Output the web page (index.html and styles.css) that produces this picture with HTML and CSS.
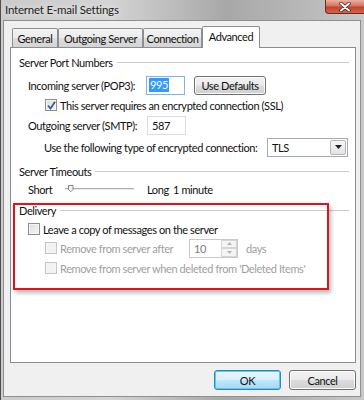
FILE: index.html
```html
<!DOCTYPE html>
<html lang="en">
<head>
    <meta charset="UTF-8">
    <meta name="viewport" content="width=device-width, initial-scale=1.0">
    <title>Internet E-mail Settings</title>
    <link rel="stylesheet" href="styles.css">
</head>
<body>
    <div class="window">
        <div class="titlebar">
            <span class="title">Internet E-mail Settings</span>
            <span class="close">
                <svg width="14" height="10" viewBox="0 0 14 10">
                    <path d="M3 1.5 L11 8.5 M11 1.5 L3 8.5" stroke="#4a1a12" stroke-width="3.4" stroke-linecap="round"/>
                    <path d="M3 1.5 L11 8.5 M11 1.5 L3 8.5" stroke="#fff" stroke-width="2" stroke-linecap="round"/>
                </svg>
            </span>
        </div>

        <div class="client">
            <div class="tabs">
                <div class="tab tab-general">General</div>
                <div class="tab tab-outgoing">Outgoing Server</div>
                <div class="tab tab-connection">Connection</div>
                <div class="tab tab-advanced active">Advanced</div>
            </div>

            <div class="panel">
                <div class="group-head"><span>Server Port Numbers</span><span class="rule"></span></div>

                <div class="row row-incoming">
                    <span class="label w-incoming">Incoming server (POP3):</span>
                    <span class="field port focused"><span class="selection">995</span></span>
                    <span class="button defaults">Use Defaults</span>
                </div>

                <div class="row row-ssl">
                    <span class="check checked">
                        <svg width="9" height="9" viewBox="0 0 9 9"><path d="M1 4.5 L3.5 7.5 L8 0.8" fill="none" stroke="#3b5a9a" stroke-width="1.8"/></svg>
                    </span>
                    <span class="check-text">This server requires an encrypted connection (SSL)</span>
                </div>

                <div class="row row-outgoing">
                    <span class="label w-outgoing">Outgoing server (SMTP):</span>
                    <span class="field port">587</span>
                </div>

                <div class="row row-enc">
                    <span class="label w-enc">Use the following type of encrypted connection:</span>
                    <span class="field select">
                        <span class="select-value">TLS</span>
                        <span class="select-arrow">
                            <svg width="7" height="4" viewBox="0 0 7 4"><path d="M0 0 H7 L3.5 4 Z" fill="#222"/></svg>
                        </span>
                    </span>
                </div>

                <div class="group-head head-timeouts"><span>Server Timeouts</span><span class="rule"></span></div>

                <div class="row row-slider">
                    <span class="label w-short">Short</span>
                    <span class="slider">
                        <span class="track"></span>
                        <svg class="thumb" width="9" height="9" viewBox="0 0 9 9">
                            <path d="M1.5 1.5 H6 V5.5 L3.8 7.8 L1.5 5.5 Z" fill="#f4f4f4" stroke="#8a8a8a"/>
                        </svg>
                    </span>
                    <span class="label w-long">Long</span>
                    <span class="label">1 minute</span>
                </div>

                <div class="group-head head-delivery"><span>Delivery</span><span class="rule"></span></div>

                <div class="row row-leave">
                    <span class="check"></span>
                    <span class="check-text">Leave a copy of messages on the server</span>
                </div>

                <div class="row row-after">
                    <span class="check disabled"></span>
                    <span class="check-text dim w-after">Remove from server after</span>
                    <span class="field spinner">
                        <span class="spin-value">10</span>
                        <span class="spin-buttons">
                            <span class="spin-btn"><svg width="5" height="3" viewBox="0 0 5 3"><path d="M0 3 H5 L2.5 0 Z" fill="#b5b5b5"/></svg></span>
                            <span class="spin-btn"><svg width="5" height="3" viewBox="0 0 5 3"><path d="M0 0 H5 L2.5 3 Z" fill="#b5b5b5"/></svg></span>
                        </span>
                    </span>
                    <span class="dim days">days</span>
                </div>

                <div class="row row-deleted">
                    <span class="check disabled"></span>
                    <span class="check-text dim">Remove from server when deleted from 'Deleted Items'</span>
                </div>
            </div>

            <div class="footer">
                <span class="button ok">OK</span>
                <span class="button cancel">Cancel</span>
            </div>
        </div>

        <!-- red annotation box drawn over the Delivery group -->
        <div class="highlight"></div>
    </div>
</body>
</html>
```

FILE: styles.css
```css
* {
    box-sizing: border-box;
}
body {
    margin: 0;
    font-family: Lato, "Noto Sans", sans-serif;
    font-size: 11px;
    letter-spacing: -0.4px;
    color: #111;
    white-space: nowrap;
}
.window {
    position: relative;
    width: 364px;
    height: 400px;
    background: linear-gradient(90deg, #cbcbcb 0%, #d4d4d4 30%, #a8a8a8 62%, #b9b9b9 85%, #c9c9c9 100%);
    border-left: 1px solid #4e4e4e;
    overflow: hidden;
}
.titlebar {
    height: 20px;
    display: flex;
    align-items: center;
    justify-content: space-between;
    padding-left: 4px;
}
.title {
    font-size: 11.5px;
    letter-spacing: -0.2px;
    color: #222;
    margin-top: -1px;
    text-shadow: 0 0 6px rgba(255, 255, 255, 0.9);
}
.close {
    align-self: flex-start;
    width: 39px;
    height: 14px;
    display: flex;
    align-items: center;
    justify-content: center;
    background: linear-gradient(#eab0a2 0%, #d7735f 45%, #c2432b 55%, #d0664c 100%);
    border: 1px solid #6a2a1f;
    border-top: none;
    border-right: none;
    border-radius: 0 0 0 4px;
}
.client {
    margin: 0 3px 0 2px;
    height: 377px;
    background: #f0f0f0;
    border: 1px solid #8d8f91;
    padding: 7px 4px 0 6px;
}

/* tabs */
.tabs {
    display: flex;
    height: 19px;
    margin-left: 2px;
}
.tab {
    height: 19px;
    border: 1px solid #8c8e94;
    border-bottom: none;
    border-radius: 2px 2px 0 0;
    background: linear-gradient(#f3f3f3 0%, #ebebeb 50%, #dedede 51%, #d4d4d4 100%);
    text-align: center;
    line-height: 20px;
}
.tab-general { width: 46px; }
.tab-outgoing { width: 85px; }
.tab-connection { width: 59px; }
.tab-advanced { width: 58px; }
.tab.active {
    position: relative;
    z-index: 1;
    height: 22px;
    margin-top: -2px;
    background: #fff;
    line-height: 19px;
}
.panel {
    height: 316px;
    background: #fff;
    border: 1px solid #898c95;
    padding: 7px 6px 0 8px;
}

/* group boxes */
.group-head {
    display: flex;
    align-items: center;
    height: 14px;
}
.group-head .rule {
    flex: 1;
    height: 1px;
    margin-left: 4px;
    margin-top: 1px;
    background: #c8ccd0;
}
.head-timeouts { margin-top: 7px; }
.head-delivery { margin-top: 4px; }

.row {
    display: flex;
    align-items: center;
    height: 20px;
    padding-left: 9px;
}
.row-incoming { margin-top: 6px; }
.row-ssl { height: 18px; margin-top: 1px; padding-left: 26px; }
.row-outgoing { margin-top: 1px; }
.row-enc { margin-top: 2px; padding-left: 25px; }
.row-slider { margin-top: 1px; }
.row-leave { height: 18px; margin-top: 3px; }
.row-after { padding-left: 26px; }
.row-deleted { height: 18px; margin-top: 1px; padding-left: 26px; }

.label { flex: none; }
.w-incoming { width: 118px; }
.w-outgoing { width: 119px; }
.w-enc { width: 223px; }
.w-short { width: 37px; }
.w-long { width: 26px; }
.w-after { width: 129px; }

/* fields */
.field {
    display: flex;
    align-items: center;
    border: 1px solid #abadb3;
    border-top-color: #e2e3ea;
    background: #fff;
    height: 19px;
}
.port {
    width: 39px;
    padding-left: 2px;
}
.port.focused {
    border-color: #7eb4ea;
}
.row-outgoing .port {
    border-color: #dcdcdc;
    padding-left: 4px;
}
.selection {
    background: #3399ff;
    color: #fff;
    padding: 0 1px;
    line-height: 14px;
}
.select {
    width: 81px;
    justify-content: space-between;
    padding: 0 1px 0 4px;
    border-color: #a5acb5;
}
.select-arrow {
    width: 16px;
    height: 15px;
    display: flex;
    align-items: center;
    justify-content: center;
    border: 1px solid #b8b8b8;
    border-radius: 2px;
    background: linear-gradient(#f7f7f7, #e2e2e2);
}
.spinner {
    width: 49px;
    border-color: #c9c9c9;
    padding-left: 4px;
    justify-content: space-between;
    color: #7a7a7a;
}
.spin-buttons {
    display: flex;
    flex-direction: column;
    width: 16px;
    height: 17px;
}
.spin-btn {
    flex: 1;
    display: flex;
    align-items: center;
    justify-content: center;
    border: 1px solid #d6d6d6;
    background: #f4f4f4;
}
.days { margin-left: 8px; }

/* check boxes */
.check {
    flex: none;
    width: 12px;
    height: 12px;
    margin-right: 3px;
    border: 1px solid #8e8f8f;
    background: linear-gradient(135deg, #dedede, #f6f6f6);
    box-shadow: inset 0 0 0 1px #f4f4f4;
    display: flex;
    align-items: center;
    justify-content: center;
}
.check.disabled {
    border-color: #c6c6c6;
    background: #f2f2f2;
}
.dim { color: #a0a0a0; }

/* slider */
.slider {
    position: relative;
    width: 69px;
    height: 12px;
    margin-right: 13px;
    display: flex;
    align-items: center;
}
.track {
    flex: 1;
    height: 2px;
    border-top: 1px solid #b0b0b0;
    border-bottom: 1px solid #e8e8e8;
}
.thumb {
    position: absolute;
    left: 2px;
    top: 1px;
}

/* buttons */
.button {
    display: flex;
    align-items: center;
    justify-content: center;
    height: 20px;
    border: 1px solid #707070;
    border-radius: 3px;
    background: linear-gradient(#f2f2f2 0%, #ebebeb 48%, #dddddd 52%, #cfcfcf 100%);
    box-shadow: inset 0 0 0 1px #fcfcfc;
}
.defaults {
    width: 72px;
    height: 19px;
    margin-left: 9px;
    margin-top: 1px;
}
.footer {
    display: flex;
    justify-content: flex-end;
    gap: 8px;
    margin-top: 7px;
    padding-right: 0;
}
.ok, .cancel {
    width: 67px;
}
.ok {
    border-color: #3c7fb1;
    box-shadow: inset 0 0 0 1px #48d1f9;
    background: linear-gradient(#eaf6fd 0%, #d9f0fc 48%, #bee6fd 52%, #a7d9f5 100%);
}

.highlight {
    position: absolute;
    left: 12px;
    top: 203px;
    width: 316px;
    height: 87px;
    border: 2px solid #e3121a;
    box-shadow: 2px 3px 4px rgba(0, 0, 0, 0.28);
}
```
